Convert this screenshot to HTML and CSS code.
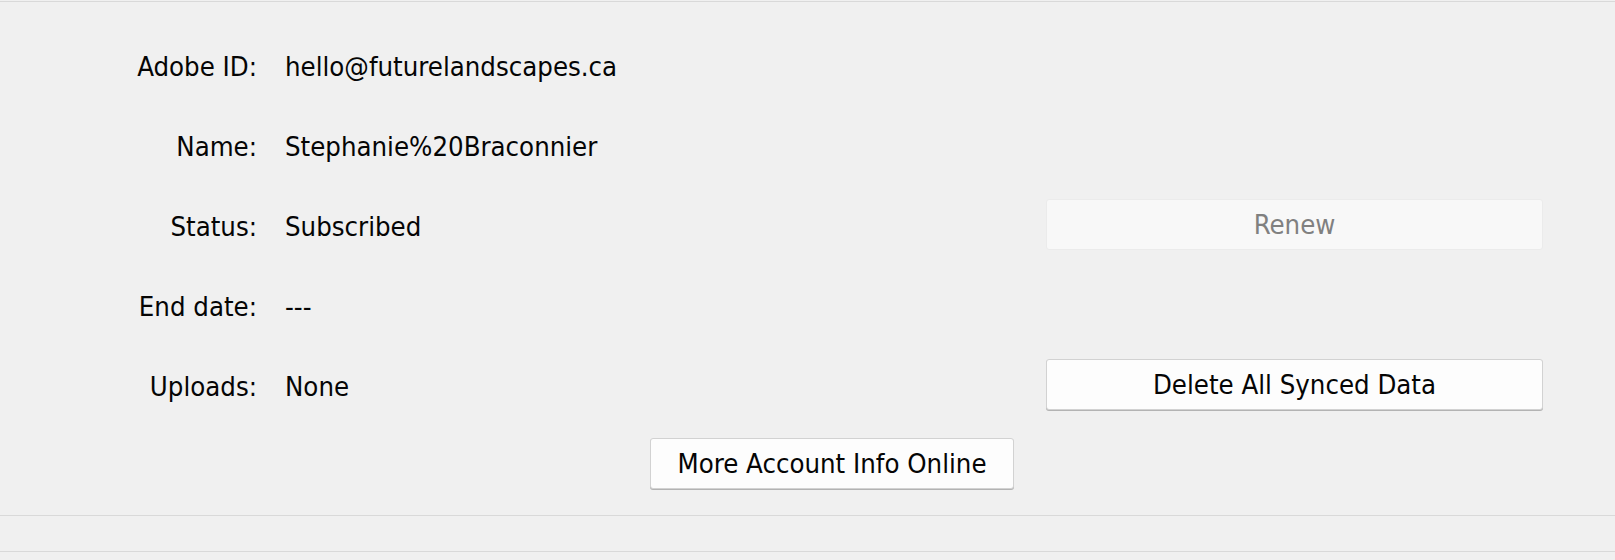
FILE: index.html
```html
<!DOCTYPE html>
<html>
<head>
<meta charset="utf-8">
<link rel="stylesheet" href="styles.css">
</head>
<body>
<div class="rule rule-top"></div>
<section class="account">
  <div class="row">
    <div class="label">Adobe ID:</div>
    <div class="value">hello@futurelandscapes.ca</div>
  </div>
  <div class="row">
    <div class="label">Name:</div>
    <div class="value">Stephanie%20Braconnier</div>
  </div>
  <div class="row">
    <div class="label">Status:</div>
    <div class="value">Subscribed</div>
    <button class="btn btn-disabled" type="button">Renew</button>
  </div>
  <div class="row">
    <div class="label">End date:</div>
    <div class="value">---</div>
  </div>
  <div class="row">
    <div class="label">Uploads:</div>
    <div class="value">None</div>
    <button class="btn" type="button">Delete All Synced Data</button>
  </div>
  <div class="more">
    <button class="btn btn-more" type="button">More Account Info Online</button>
  </div>
</section>
<div class="rule"></div>
<div class="strip"></div>
<div class="rule"></div>
</body>
</html>
```
FILE: styles.css
```css
html, body {
  margin: 0;
  padding: 0;
  background: #f0f0f0;
}
body {
  padding-top: 1px;
  font-family: "DejaVu Sans Condensed", "DejaVu Sans", sans-serif;
  font-size: 27.3px;
  color: #050505;
}
.rule {
  height: 1px;
  background: #d9d9d9;
}
.account {
  padding: 24px 72px 26px 0;
}
.row {
  display: grid;
  grid-template-columns: 257px 1fr 497px;
  column-gap: 28px;
  height: 80px;
  align-items: start;
}
.label,
.value {
  line-height: 78px;
  padding-top: 2px;
  white-space: nowrap;
}
.label {
  text-align: right;
}
.btn {
  font-family: inherit;
  font-size: inherit;
  color: #050505;
  background: #fdfdfd;
  border: 1px solid #d2d2d2;
  border-radius: 3px;
  box-shadow: 0 1px 0 #b3b3b3;
  height: 51px;
  padding: 0;
  margin: 0;
}
.row .btn {
  grid-column: 3;
  margin-top: 13px;
}
.btn-disabled {
  color: #808080;
  background: #f8f8f8;
  border-color: #ebebeb;
  box-shadow: none;
}
.more {
  display: flex;
  padding-left: 650px;
  margin-top: 12px;
}
.btn-more {
  width: 364px;
}
.strip {
  height: 35px;
}
```
